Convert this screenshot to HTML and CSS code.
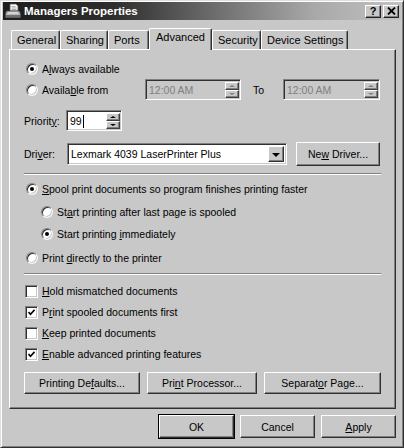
FILE: index.html
```html
<!DOCTYPE html>
<html>
<head>
<meta charset="utf-8">
<link rel="stylesheet" href="styles.css">
</head>
<body>
<div class="window">
  <div class="titlebar">
    <svg class="ticon" width="16" height="16" viewBox="0 0 16 16">
      <path d="M5 1h6l2 2v5H5z" fill="#fff" stroke="#555" stroke-width="0.8"/>
      <path d="M6.5 3.5h4M6.5 5h5M6.5 6.5h5" stroke="#888" stroke-width="0.7"/>
      <path d="M1.5 8h13l1 3v3.5H0.5V11z" fill="#b8b8b8" stroke="#444" stroke-width="0.8"/>
      <rect x="1" y="12" width="14" height="2.5" fill="#707070"/>
      <rect x="3" y="9.3" width="10" height="1.2" fill="#e8e8e8"/>
    </svg>
    <span class="title">Managers Properties</span>
    <div class="capbtns">
      <span class="capbtn help">?</span>
      <span class="capbtn close"><svg width="9" height="8" viewBox="0 0 9 8"><path d="M1 0.5l7 7M8 0.5l-7 7" stroke="#000" stroke-width="1.8"/></svg></span>
    </div>
  </div>

  <div class="tabs">
    <div class="tab t-general">General</div>
    <div class="tab t-sharing">Sharing</div>
    <div class="tab t-ports">Ports</div>
    <div class="tab t-adv active">Advanced</div>
    <div class="tab t-sec">Security</div>
    <div class="tab t-dev">Device Settings</div>
  </div>

  <div class="panel">
    <div class="row r-always">
      <span class="radio on"></span><span>A<u>l</u>ways available</span>
    </div>
    <div class="row r-from">
      <span class="radio"></span><span class="from-lbl">Availa<u>b</u>le from</span>
      <div class="field time t1"><span class="val">12:00 AM</span><div class="spin dis"><span class="sb up"></span><span class="sb dn"></span></div></div>
      <span class="to">To</span>
      <div class="field time t2"><span class="val">12:00 AM</span><div class="spin dis"><span class="sb up"></span><span class="sb dn"></span></div></div>
    </div>
    <div class="row r-prio">
      <span class="prio-lbl">Priorit<u>y</u>:</span>
      <div class="field prio"><span class="val">99</span><span class="caret"></span><div class="spin"><span class="sb up"></span><span class="sb dn"></span></div></div>
    </div>
    <div class="row r-driver">
      <span class="drv-lbl">Dri<u>v</u>er:</span>
      <div class="field select"><span class="val">Lexmark 4039 LaserPrinter Plus</span><span class="ddbtn"></span></div>
      <span class="btn newdrv"><span>Ne<u>w</u> Driver...</span></span>
    </div>
    <div class="sep s1"></div>
    <div class="row r-spool">
      <span class="radio on"></span><span><u>S</u>pool print documents so program finishes printing faster</span>
    </div>
    <div class="row sub r-after">
      <span class="radio"></span><span>St<u>a</u>rt printing after last page is spooled</span>
    </div>
    <div class="row sub r-immed">
      <span class="radio on"></span><span>Start printing <u>i</u>mmediately</span>
    </div>
    <div class="row r-direct">
      <span class="radio"></span><span>Print <u>d</u>irectly to the printer</span>
    </div>
    <div class="sep s2"></div>
    <div class="row r-c1">
      <span class="check"></span><span><u>H</u>old mismatched documents</span>
    </div>
    <div class="row r-c2">
      <span class="check on"><svg width="7" height="7" viewBox="0 0 7 7"><path d="M0.5 3l2 2.2L6.5 0.8" fill="none" stroke="#000" stroke-width="1.6"/></svg></span><span>P<u>r</u>int spooled documents first</span>
    </div>
    <div class="row r-c3">
      <span class="check"></span><span><u>K</u>eep printed documents</span>
    </div>
    <div class="row r-c4">
      <span class="check on"><svg width="7" height="7" viewBox="0 0 7 7"><path d="M0.5 3l2 2.2L6.5 0.8" fill="none" stroke="#000" stroke-width="1.6"/></svg></span><span><u>E</u>nable advanced printing features</span>
    </div>
    <div class="btnrow">
      <span class="btn b-def"><span>Printing De<u>f</u>aults...</span></span>
      <span class="btn b-proc"><span>Pri<u>n</u>t Processor...</span></span>
      <span class="btn b-sep"><span>Separat<u>o</u>r Page...</span></span>
    </div>
  </div>

  <div class="footer">
    <span class="btn fbtn default"><span>OK</span></span>
    <span class="btn fbtn"><span>Cancel</span></span>
    <span class="btn fbtn"><span><u>A</u>pply</span></span>
  </div>
</div>
</body>
</html>
```
FILE: styles.css
```css
* { box-sizing: border-box; }
html, body { margin: 0; padding: 0; }
body {
  width: 404px; height: 448px; overflow: hidden;
  background: #c8c8c8;
  font-family: "Liberation Sans", Arial, sans-serif;
  font-size: 10.5px; color: #000;
}
u { text-decoration: underline; text-underline-offset: 1px; }

.window {
  width: 404px; height: 448px;
  border: 1px solid; border-color: #dedede #303030 #303030 #dedede;
  box-shadow: inset 1px 1px #fff, inset -1px -1px #808080;
  padding: 1px 2px 2px 2px;
  display: flex; flex-direction: column;
  background: #c8c8c8;
}

/* title bar */
.titlebar {
  height: 18px; display: flex; align-items: center;
  background: linear-gradient(to right, #1e1e1e 0%, #2e2e2e 28%, #6a6a6a 52%, #a8a8a8 78%, #c2c2c2 100%);
  padding-left: 2px;
}
.ticon { flex: 0 0 16px; }
.title { color: #fff; font-weight: bold; font-size: 11.5px; margin-left: 3px; }
.capbtns { margin-left: auto; margin-right: 2px; display: flex; gap: 2px; }
.capbtn {
  width: 16px; height: 13px; background: #c8c8c8;
  border: 1px solid; border-color: #fff #202020 #202020 #fff;
  box-shadow: inset -1px -1px #808080;
  display: flex; align-items: center; justify-content: center;
  font-weight: bold; font-size: 11px; line-height: 1;
}

/* tabs */
.tabs {
  display: flex; align-items: flex-end;
  height: 21px; margin-top: 8px; margin-left: 8px;
  position: relative; z-index: 2;
  font-size: 11px;
}
.tab {
  height: 19px;
  border-top: 1px solid #fff; border-left: 1px solid #fff; border-right: 1px solid #303030;
  box-shadow: inset -1px 0 #808080;
  border-radius: 2px 2px 0 0;
  padding: 3px 0 0 5px; line-height: 13px;
  background: #c8c8c8;
}
.tab.active { height: 22px; margin-bottom: -1px; padding-top: 2px; padding-left: 6px; }
.t-general { width: 49px; }
.t-sharing { width: 48px; }
.t-ports { width: 41px; }
.t-adv { width: 63px; }
.t-sec { width: 49px; }
.t-dev { width: 87px; }

/* panel */
.panel {
  height: 360px;
  margin: 0 5px 0 6px;
  border: 1px solid; border-color: #fff #303030 #303030 #fff;
  box-shadow: inset -1px -1px #808080;
  padding: 9px 14px 0 14px;
  display: flex; flex-direction: column;
}
.row { display: flex; align-items: center; white-space: nowrap; }
.r-always { height: 20px; }
.r-from { height: 21px; }
.r-prio { height: 21px; margin-top: 10px; }
.r-driver { height: 24px; margin-top: 11px; }
.sep { height: 2px; border-top: 1px solid #808080; border-bottom: 1px solid #fff; }
.s1 { margin-top: 7px; }
.r-spool { height: 16px; margin-top: 6px; }
.r-after { height: 16px; margin-top: 7px; }
.r-immed { height: 16px; margin-top: 6px; }
.r-direct { height: 16px; margin-top: 8px; }
.s2 { margin-top: 7px; }
.r-c1 { height: 16px; margin-top: 8px; }
.r-c2, .r-c3, .r-c4 { height: 16px; margin-top: 5px; }
.sub { padding-left: 15px; }

.radio {
  flex: 0 0 12px; width: 12px; height: 12px; border-radius: 50%;
  margin: 0 4px 0 2px;
  background: #fff;
  border: 1px solid; border-color: #808080 #f4f4f4 #f4f4f4 #808080;
  box-shadow: inset 1px 1px #303030, inset -1px -1px #c8c8c8;
  display: flex; align-items: center; justify-content: center;
}
.radio.on::after { content: ""; width: 4px; height: 4px; border-radius: 50%; background: #000; }
.check {
  flex: 0 0 13px; width: 13px; height: 13px;
  margin: 0 4px 0 1px;
  background: #fff;
  border: 1px solid; border-color: #808080 #fff #fff #808080;
  box-shadow: inset 1px 1px #303030, inset -1px -1px #c8c8c8;
  display: flex; align-items: center; justify-content: center;
}

/* fields */
.field {
  height: 21px; display: flex; align-items: center;
  border: 1px solid; border-color: #808080 #fff #fff #808080;
  box-shadow: inset 1px 1px #303030, inset -1px -1px #c8c8c8;
  padding: 2px 1px 1px 2px;
  background: #fff;
}
.field .val { padding-left: 1px; }
.time { background: #c8c8c8; color: #808080; }
.from-lbl { flex: 0 0 103px; }
.t1 { flex: 0 0 96px; }
.to { flex: 0 0 42px; padding-left: 12px; }
.t2 { flex: 0 0 97px; }
.spin { margin-left: auto; width: 14px; height: 16px; display: flex; flex-direction: column; }
.sb {
  flex: 1; background: #c8c8c8;
  border: 1px solid; border-color: #fff #404040 #404040 #fff;
  box-shadow: inset -1px -1px #808080;
  display: flex; align-items: center; justify-content: center;
}
.sb.up::after { content: ""; border-left: 3px solid transparent; border-right: 3px solid transparent; border-bottom: 2px solid #000; }
.sb.dn::after { content: ""; border-left: 3px solid transparent; border-right: 3px solid transparent; border-top: 2px solid #000; }
.spin.dis .sb.up::after { border-bottom-color: #808080; }
.spin.dis .sb.dn::after { border-top-color: #808080; }

.prio-lbl { flex: 0 0 42px; }
.prio { flex: 0 0 56px; }
.caret { width: 1px; height: 13px; background: #000; margin-left: 1px; }

.drv-lbl { flex: 0 0 43px; }
.select { flex: 0 0 220px; height: 22px; padding: 2px 2px 2px 2px; }
.ddbtn {
  margin-left: auto; width: 16px; height: 16px;
  background: #c8c8c8;
  border: 1px solid; border-color: #fff #303030 #303030 #fff;
  box-shadow: inset -1px -1px #808080;
  display: flex; align-items: center; justify-content: center;
}
.ddbtn::after { content: ""; border-left: 4px solid transparent; border-right: 4px solid transparent; border-top: 4px solid #000; margin-top: 1px; }

/* buttons */
.btn {
  display: flex; align-items: center; justify-content: center;
  background: #c8c8c8;
  border: 1px solid; border-color: #fff #303030 #303030 #fff;
  box-shadow: inset -1px -1px #808080;
  white-space: nowrap;
}
.newdrv { flex: 0 0 84px; height: 24px; margin-left: 9px; }
.btnrow { display: flex; justify-content: space-between; margin-top: 10px; height: 22px; }
.b-def { width: 116px; }
.b-proc { width: 110px; }
.b-sep { width: 117px; }

.footer { display: flex; justify-content: flex-end; gap: 6px; margin-top: 6px; padding-right: 5px; }
.fbtn { width: 75px; height: 23px; }
.fbtn.default { outline: 1px solid #000; }
```
